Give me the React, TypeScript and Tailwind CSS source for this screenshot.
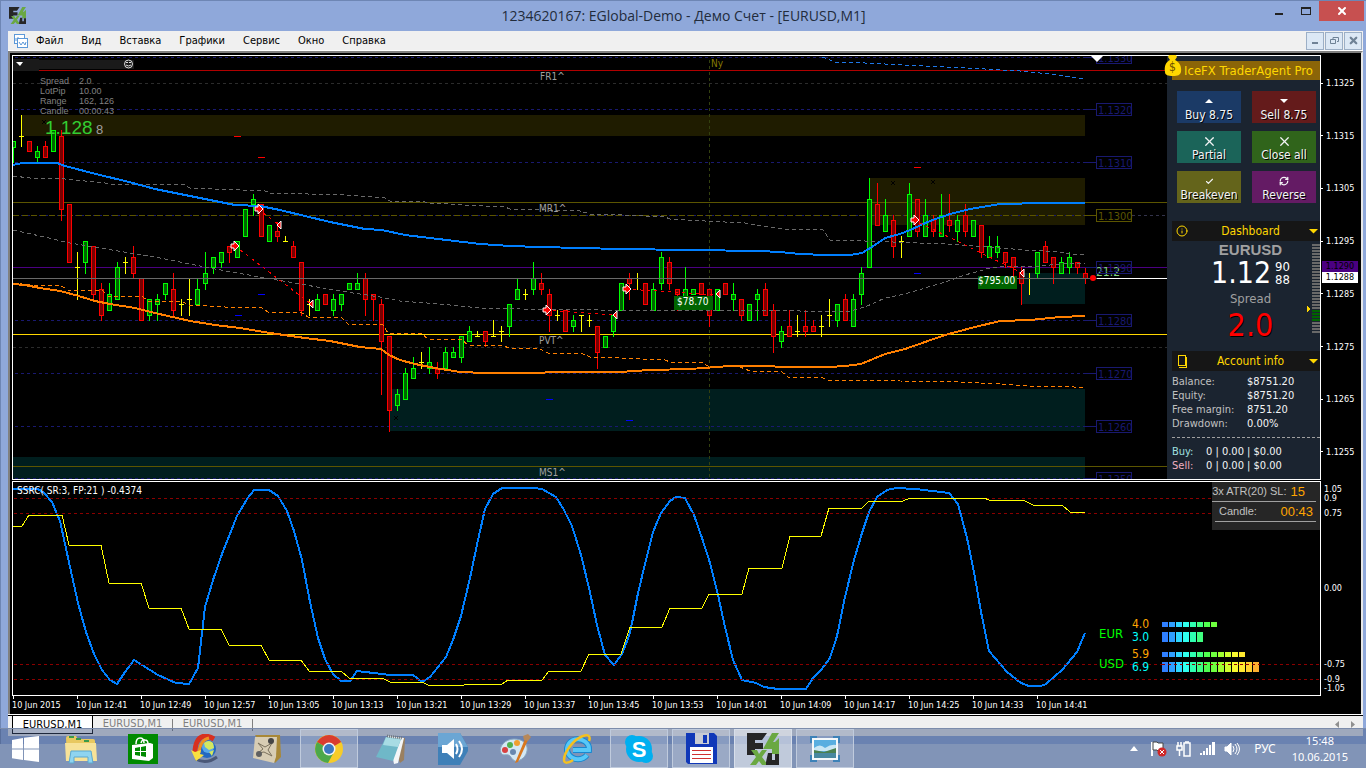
import type { ReactNode } from 'react'
import { Check, Info, RefreshCw, X } from 'lucide-react'

type Kind = 'u' | 'd' | 'n'
// high, body top, body bottom, low, kind (up / down / neutral)
type Candle = [number, number, number, number, Kind]

const candles: Candle[] = [
  [141, 141, 147, 162, 'u'], [115, 136, 136, 146, 'n'], [141, 141, 151, 151, 'd'], [146, 151, 157, 162, 'u'],
  [141, 146, 157, 157, 'd'], [130, 130, 151, 151, 'u'], [130, 136, 209, 220, 'd'], [204, 204, 262, 262, 'd'],
  [252, 267, 267, 299, 'n'], [241, 241, 262, 273, 'u'], [246, 246, 294, 298, 'd'], [283, 289, 315, 320, 'd'],
  [283, 294, 310, 310, 'u'], [262, 267, 299, 299, 'u'], [257, 262, 262, 273, 'n'], [246, 257, 273, 277, 'd'],
  [278, 278, 320, 320, 'd'], [299, 299, 315, 320, 'u'], [294, 299, 304, 320, 'u'], [283, 283, 294, 299, 'u'],
  [273, 289, 310, 316, 'd'], [299, 304, 304, 315, 'n'], [279, 299, 299, 315, 'n'], [279, 289, 304, 304, 'u'],
  [252, 273, 283, 289, 'u'], [257, 257, 267, 273, 'u'], [252, 252, 262, 267, 'u'], [246, 246, 252, 262, 'd'],
  [241, 241, 257, 257, 'u'], [209, 209, 236, 236, 'u'], [194, 199, 204, 215, 'u'], [204, 204, 236, 236, 'd'],
  [225, 225, 241, 241, 'u'], [222, 231, 236, 241, 'd'], [236, 241, 241, 241, 'n'], [241, 246, 257, 257, 'd'],
  [262, 262, 310, 315, 'd'], [299, 304, 304, 315, 'n'], [294, 299, 310, 310, 'u'], [294, 294, 304, 304, 'd'],
  [294, 299, 310, 315, 'u'], [294, 294, 304, 310, 'u'], [283, 283, 289, 289, 'u'], [273, 283, 289, 289, 'u'],
  [273, 278, 299, 315, 'd'], [294, 294, 299, 320, 'd'], [299, 304, 341, 394, 'd'], [336, 336, 410, 431, 'd'],
  [389, 394, 405, 410, 'u'], [368, 373, 399, 399, 'u'], [357, 368, 378, 378, 'u'], [352, 362, 362, 368, 'n'],
  [347, 362, 368, 373, 'u'], [362, 369, 373, 378, 'd'], [347, 352, 368, 368, 'u'], [347, 352, 357, 357, 'u'],
  [336, 336, 357, 362, 'u'], [326, 331, 341, 341, 'u'], [331, 336, 336, 336, 'n'], [331, 331, 341, 346, 'd'],
  [320, 336, 336, 336, 'n'], [326, 331, 331, 341, 'n'], [304, 304, 326, 336, 'u'], [278, 289, 299, 299, 'u'],
  [289, 294, 294, 299, 'n'], [262, 278, 289, 294, 'u'], [273, 283, 289, 294, 'd'], [289, 294, 315, 331, 'd'],
  [310, 315, 315, 320, 'n'], [310, 310, 331, 331, 'd'], [315, 320, 326, 331, 'u'], [315, 315, 315, 331, 'n'],
  [315, 320, 320, 326, 'n'], [326, 326, 352, 368, 'd'], [336, 336, 347, 347, 'u'], [315, 315, 331, 336, 'u'],
  [283, 283, 310, 310, 'u'], [273, 278, 283, 299, 'd'], [273, 278, 278, 289, 'n'], [283, 283, 304, 304, 'd'],
  [283, 289, 310, 310, 'u'], [252, 257, 283, 289, 'u'], [257, 262, 283, 289, 'd'], [289, 289, 294, 310, 'd'],
  [267, 289, 299, 299, 'u'], [289, 289, 294, 294, 'u'], [283, 283, 294, 294, 'd'], [289, 289, 315, 326, 'd'],
  [289, 289, 310, 310, 'u'], [283, 283, 294, 294, 'd'], [283, 294, 299, 310, 'u'], [299, 299, 315, 320, 'd'],
  [304, 304, 320, 320, 'u'], [289, 294, 299, 320, 'u'], [283, 289, 315, 315, 'd'], [304, 310, 336, 352, 'd'],
  [326, 331, 341, 347, 'u'], [310, 326, 336, 336, 'd'], [315, 331, 331, 336, 'n'], [310, 326, 331, 336, 'd'],
  [320, 326, 331, 331, 'd'], [315, 326, 326, 336, 'n'], [299, 315, 315, 326, 'n'], [304, 304, 320, 326, 'u'],
  [294, 299, 320, 320, 'd'], [294, 299, 326, 326, 'u'], [267, 273, 294, 304, 'u'], [178, 199, 267, 267, 'u'],
  [183, 204, 225, 225, 'd'], [199, 215, 231, 231, 'u'], [215, 220, 246, 257, 'd'], [236, 241, 241, 257, 'n'],
  [183, 194, 236, 236, 'u'], [199, 199, 231, 236, 'd'], [199, 215, 236, 236, 'u'], [215, 220, 231, 236, 'd'],
  [194, 215, 236, 236, 'u'], [194, 220, 225, 231, 'd'], [215, 220, 231, 241, 'u'], [204, 215, 231, 236, 'd'],
  [220, 220, 236, 236, 'u'], [225, 225, 252, 257, 'd'], [236, 246, 257, 257, 'u'], [236, 246, 252, 257, 'u'],
  [252, 252, 262, 267, 'd'], [257, 257, 267, 279, 'd'], [267, 272, 283, 304, 'd'], [273, 278, 278, 294, 'n'],
  [252, 252, 273, 277, 'u'], [241, 246, 262, 262, 'd'], [257, 257, 267, 283, 'd'], [257, 262, 273, 273, 'u'],
  [252, 257, 267, 273, 'u'], [262, 262, 267, 273, 'd'], [267, 273, 278, 283, 'd'],
]

const colors: Record<Kind, [string, string]> = {
  u: ['#00ff00', '#006400'],
  d: ['#ff0000', '#780000'],
  n: ['#ffff00', '#ffff00'],
}

const upperBand =
  '13,165 22,163 57,163 65,166 100,175 125,181 155,189 190,196 215,201 235,205 260,206 280,210 305,216 330,222 365,229 382,230 405,235 430,238 455,241 480,244 510,246 540,247 580,248 620,249 690,250 760,251 780,252 800,254 825,255 850,255 862,253 875,245 885,238 900,234 910,230 930,221 950,214 970,209 1000,204 1045,203 1085,203'
const lowerBand =
  '13,284 25,285 40,288 60,291 75,295 95,301 110,304 135,308 155,313 190,321 215,325 240,328 270,333 305,338 330,341 360,347 381,349 389,355 400,360 415,364 435,368 460,372 485,373 530,373 560,372 620,372 650,370 690,369 730,366 760,366 790,367 830,367 845,366 861,364 885,354 905,349 925,342 945,335 975,327 1000,321 1030,320 1060,317 1085,316'
const greyUpper =
  '13,176 30,178 65,179 105,183 110,184 185,185 190,188 265,191 270,193 345,195 385,198 390,201 425,202 430,203 465,205 505,207 510,209 580,211 590,214 625,215 665,217 670,219 705,221 745,223 782,229 823,230 830,240 865,241 920,243 945,244 975,246 1000,248 1025,250 1060,252 1070,254 1085,254'
const greyMiddle =
  '13,230 40,236 70,243 100,248 130,253 160,258 190,264 215,269 260,277 300,284 340,291 380,297 400,301 440,304 480,308 520,309 600,310 760,310 800,311 850,311 865,307 885,298 905,294 925,288 945,282 965,275 990,268 1010,266 1040,266 1060,264 1085,263'
const orangeDashed =
  '13,283 30,285 60,285 68,290 103,291 108,296 143,297 148,301 183,302 188,305 225,307 262,308 268,312 302,313 308,317 342,318 348,324 383,325 388,333 422,334 428,339 462,340 468,345 503,346 510,348 540,349 548,353 583,354 590,357 620,358 665,360 670,362 703,363 708,366 740,367 750,371 782,372 788,377 823,378 830,381 860,380 900,381 960,382 1000,384 1030,386 1065,386 1083,388'

const ssrcBlue =
  '13,489 38,489 44,493 52,502 60,521 70,567 78,603 86,632 94,654 102,670 110,680 117,684 125,672 134,660 142,665 158,675 176,683 189,684 198,668 205,607 213,580 222,554 237,516 247,499 254,490 269,490 278,496 287,511 294,531 302,560 310,602 318,638 325,659 333,674 341,681 350,681 357,671 390,675 413,675 422,682 430,677 446,657 453,640 461,616 470,578 478,540 485,509 493,494 502,488 533,488 542,489 556,497 564,510 572,526 581,555 589,588 597,625 605,655 614,665 622,654 629,636 632,623 638,593 646,560 653,532 661,513 670,501 676,497 685,498 694,515 702,538 710,563 718,595 725,627 733,660 742,680 756,683 764,687 778,689 806,689 813,678 821,670 830,658 837,636 845,597 854,560 862,533 869,512 877,497 887,490 896,488 916,489 949,493 958,504 967,538 974,572 981,612 989,651 1007,672 1021,683 1029,686 1041,686 1046,684 1062,670 1077,652 1085,633'
const ssrcYellow =
  '13,526 22,526 29,515 62,515 69,545 101,545 109,583 141,583 149,608 181,608 189,629 221,629 229,645 261,645 269,660 301,660 309,671 341,671 349,678 382,678 390,682 422,682 428,685 464,685 502,684 508,680 542,680 549,671 581,671 589,654 621,654 630,627 662,627 670,608 702,608 709,594 742,594 749,568 782,568 790,536 821,536 829,508 862,508 869,501 903,501 910,498 984,498 989,500 1023,500 1033,505 1062,505 1070,512 1085,512'

const priceTags = [
  { y: 57, label: '1.1330' }, { y: 109, label: '1.1320' }, { y: 162, label: '1.1310' },
  { y: 215, label: '1.1300', olive: true }, { y: 267, label: '1.1290' }, { y: 320, label: '1.1280' },
  { y: 373, label: '1.1270' }, { y: 426, label: '1.1260' }, { y: 478, label: '1.1250' },
]

const entries = [[259, 209], [235, 246], [547, 310], [627, 289], [915, 220]]
const exits = [[279, 225], [311, 304], [615, 315], [718, 294], [1022, 273]]
const fractals = [
  [237, 136, 'red'], [261, 157, 'red'], [917, 167, 'red'], [261, 294, 'blue'], [238, 315, 'blue'],
  [549, 399, 'blue'], [629, 420, 'blue'], [917, 273, 'blue'],
] as const

const meterColors = [
  '#2f7fff', '#2f9fff', '#2fd7ff', '#2fffef', '#2fffb0', '#3fff80', '#4fff4f',
  '#6fff3f', '#a0ff30', '#d0ff2f', '#f8f82f', '#ffe82f', '#ffcf2f', '#ffb02f',
]
const meters = [
  { y: 622, h: 5, count: 8 }, { y: 632, h: 10, count: 6 },
  { y: 652, h: 5, count: 12 }, { y: 662, h: 10, count: 14 },
]

function PriceChart() {
  return (
    <svg viewBox="13 56 1154 423" className="block h-auto w-full font-['DejaVu_Sans_Condensed','Noto_Sans',sans-serif]">
      <rect x="21" y="115" width="1064" height="21" fill="#1f1c00" />
      <rect x="869" y="178" width="216" height="47" fill="#1f1c00" />
      <rect x="389" y="389" width="696" height="42" fill="#001e1e" />
      <rect x="13" y="457" width="1072" height="22" fill="#001e1e" />
      <rect x="1021" y="273" width="64" height="31" fill="#001e1e" />

      <g shapeRendering="crispEdges" fill="none">
        <path d="M13 83.5H1167M13 347.5H1167" stroke="#2c2c2c" strokeDasharray="3 3" />
        {priceTags.map((t) => (
          <path key={t.label} d={`M15 ${t.y}.5H1085`} stroke="#191970" strokeDasharray="3 3" />
        ))}
        <path d="M13 215.5H1085" stroke="#5c5500" strokeDasharray="6 3" />
        <path d="M1132 215.5H1167" stroke="#33334a" strokeDasharray="3 3" />
        <path d="M709.5 60V479" stroke="#33400f" strokeDasharray="3 3" />
        <path d="M39 70.5H1167" stroke="#b00000" />
        <path d="M13 202.5H1167M13 466.5H1167" stroke="#5c5500" />
        <path d="M13 267.5H1167" stroke="#4b0082" />
        <path d="M13 334.5H1167" stroke="#ffd700" />
      </g>

      <g shapeRendering="crispEdges">
        {candles.map(([high, top, bottom, low, kind], i) => {
          const x = 13 + i * 8
          const [line, fill] = colors[kind]
          return (
            <g key={i} stroke={line} fill={fill}>
              <path d={`M${x}.5 ${high}V${low + 1}`} />
              {kind === 'n' ? <path d={`M${x - 2} ${top}.5h5`} /> : <rect x={x - 1.5} y={top + 0.5} width="4" height={Math.max(bottom - top, 1)} />}
            </g>
          )
        })}
      </g>

      <path d="M13 278.5H1097" stroke="#696969" shapeRendering="crispEdges" />
      <path d="M1097 278.5H1167" stroke="#fff" shapeRendering="crispEdges" />
      <g fill="none" shapeRendering="crispEdges">
        <polyline points={greyUpper} stroke="#696969" strokeDasharray="4 3" />
        <polyline points={greyMiddle} stroke="#696969" strokeDasharray="4 3" />
        <polyline points={orangeDashed} stroke="#ff7f00" strokeDasharray="4 3" />
        <polyline points="822,57 835,62 865,63 905,65 945,67 985,69 1020,71 1050,74 1085,79" stroke="#1e78e8" strokeDasharray="4 3" />
        <polyline points={upperBand} stroke="#007fff" strokeWidth="2" />
        <polyline points={lowerBand} stroke="#ff7f00" strokeWidth="2" />
        <path
          d="M258 209L279 225M235 246L311 304M546 310L615 315M626 289L718 295M914 220L1022 273"
          stroke="#ff0000"
          strokeDasharray="3 4"
        />
      </g>

      {fractals.map(([x, y, c]) => (
        <rect key={`${x}-${y}`} x={x - 3} y={y} width="7" height="1" fill={c === 'red' ? '#ff0000' : '#0000ff'} />
      ))}
      {[[44, 122], [893, 183], [933, 182], [396, 418]].map(([x, y]) => (
        <path key={x} d={`M${x - 2} ${y - 2}l4 4m0 -4l-4 4`} stroke="#000" />
      ))}

      <rect x="674" y="296" width="39" height="14" fill="#006400" />
      <text x="677" y="305" fontSize="10" fill="#fff">$78.70</text>
      <rect x="978" y="276" width="39" height="13" fill="#006400" />
      <text x="978" y="284" fontSize="10" fill="#fff">$795.00</text>

      {entries.map(([x, y]) => (
        <path key={x} d={`M${x - 4} ${y - 2}h3v-3l5 5l-5 5v-3h-3z`} fill="#ff0000" stroke="#fff" />
      ))}
      {exits.map(([x, y]) => (
        <path key={x} d={`M${x + 2} ${y - 4}v8l-4 -4z`} fill="#ff0000" stroke="#fff" />
      ))}

      <text x="1096" y="276" fontSize="12" fill="#7fd07f">21.2</text>
      {priceTags.map((t) => (
        <g key={t.label} stroke={t.olive ? '#5c5500' : '#191970'} shapeRendering="crispEdges">
          <path d={`M1085 ${t.y}.5h12`} />
          <rect x="1096.5" y={t.y - 5.5} width="35" height="12" fill="none" />
          <text x="1098" y={t.y + 5} fontSize="11" stroke="none" fill={t.olive ? '#5c5500' : '#191970'}>{t.label}</text>
        </g>
      ))}
      <circle cx="1093" cy="278" r="3" fill="#ff0000" />

      <g fontSize="10" fill="#a0a0a0">
        <text x="540" y="80">FR1^</text>
        <text x="539" y="212">MR1^</text>
        <text x="539" y="344">PVT^</text>
        <text x="539" y="476">MS1^</text>
      </g>
      <text x="711" y="67" fontSize="10" fill="#857c00">Ny</text>
      <path d="M1091 56h12l-6 6z" fill="#fff" />

      <path d="M13 59h26v1h95v9h-95v2h-26z" fill="#1a1a1a" />
      <path d="M16 62h7l-3 4z" fill="#fff" />
      <circle cx="128.500" cy="64" r="4" fill="none" stroke="#ddd" />
      <path d="M126 62.500h2m1 0h2M126 65q2.500 2 5 0" fill="none" stroke="#ddd" />

      <g className="font-['Liberation_Sans',sans-serif]">
        <g fontSize="9" fill="#808080">
          <text x="40" y="84">Spread</text><text x="79" y="84">2.0</text>
          <text x="40" y="94">LotPip</text><text x="79" y="94">10.00</text>
          <text x="40" y="104">Range</text><text x="79" y="104">162, 126</text>
          <text x="40" y="114">Candle</text><text x="79" y="114">00:00:43</text>
        </g>
        <text x="45" y="134" fontSize="19" fill="#32cd32">1.128</text>
        <text x="96" y="134" fontSize="13" fill="#a0a0a0">8</text>
      </g>
    </svg>
  )
}

function SsrcChart() {
  return (
    <svg viewBox="13 482 1307 213" className="block h-auto w-full font-['DejaVu_Sans_Condensed','Noto_Sans',sans-serif]">
      <g fill="none" shapeRendering="crispEdges">
        <polyline points={ssrcBlue} stroke="#007fff" strokeWidth="2" />
        <path d="M14 498.5H1320M14 513.5H1320M14 664.5H1320M14 679.5H1320" stroke="#8b0000" strokeDasharray="3 3" />
        <polyline points={ssrcYellow} stroke="#ffff00" />
      </g>
      <text x="17" y="494" fontSize="10" fill="#fff">SSRC( SR:3, FP:21 ) -0.4374</text>
      <g fontSize="13" fill="#00ff00">
        <text x="1099" y="638">EUR</text>
        <text x="1099" y="668">USD</text>
      </g>
      <g fontSize="12">
        <text x="1132" y="628" fill="#ffa500">4.0</text>
        <text x="1132" y="641" fill="#00ffff">3.0</text>
        <text x="1132" y="658" fill="#ffa500">5.9</text>
        <text x="1132" y="671" fill="#00ffff">6.9</text>
      </g>
      {meters.map((m) =>
        meterColors.slice(0, m.count).map((c, i) => (
          <rect key={`${m.y}-${i}`} x={1162 + i * 7} y={m.y} width="6" height={m.h} fill={c} />
        )),
      )}
      <path d="M1162 664.5h98" stroke="#8b0000" strokeDasharray="3 3" />
    </svg>
  )
}

function AgentButton({ label, icon, className }: { label: string; icon: ReactNode; className: string }) {
  return (
    <button className={`flex h-8 w-16 flex-col items-center justify-between pt-1 text-[12px] leading-4 whitespace-nowrap text-gray-100 ${className}`}>
      <span className="flex h-3 items-center">{icon}</span>
      <span className="[text-shadow:1px_1px_0_#000]">{label}</span>
    </button>
  )
}

function SectionHead({ title, icon }: { title: string; icon: ReactNode }) {
  return (
    <div className="ml-[5px] flex h-5 items-center bg-[#161616] pr-[2px] pl-1 text-[12px] text-[#ffd700]">
      {icon}
      <span className="flex-1 pl-1 text-center">{title}</span>
      <svg width="9" height="5" viewBox="0 0 9 5"><path d="M0 0h9L4.500 4.500z" fill="#ffd700" /></svg>
    </div>
  )
}

const account = [
  ['Balance:', '$8751.20'],
  ['Equity:', '$8751.20'],
  ['Free margin:', '8751.20'],
  ['Drawdown:', '0.00%'],
]

function AgentPanel() {
  return (
    <aside className="relative w-[153px] shrink-0 bg-[#1b2430] pt-[5px]">
      <svg width="18" height="22" viewBox="0 0 18 22" className="absolute -top-px -left-[3px]">
        <path d="M5 0h7l1 2-2 3c4 2 7 6 6 12-1 3-3 4-8 4s-8-1-8-4C0 11 2 7 6 5L4 2z" fill="#ffd700" />
        <text x="5" y="16" fontSize="12" fill="#6b4e00">$</text>
      </svg>
      <h2 className="ml-[5px] h-[19px] bg-[#8b6508] pl-3 text-[13px] leading-[19px] whitespace-nowrap text-[#ffd700]">IceFX TraderAgent Pro</h2>
      <div className="mt-[11px] ml-[10px] grid w-[139px] grid-cols-[64px_64px] justify-between gap-y-2">
        <AgentButton label="Buy 8.75" className="bg-[#1b3a66]" icon={<svg width="8" height="4"><path d="M0 4h8L4 0z" fill="#fff" /></svg>} />
        <AgentButton label="Sell 8.75" className="bg-[#641b1b]" icon={<svg width="8" height="4"><path d="M0 0h8L4 4z" fill="#fff" /></svg>} />
        <AgentButton label="Partial" className="bg-[#1b6459]" icon={<X size={15} />} />
        <AgentButton label="Close all" className="bg-[#30641b]" icon={<X size={15} />} />
        <AgentButton label="Breakeven" className="bg-[#64641b]" icon={<Check size={9} strokeWidth={3} />} />
        <AgentButton label="Reverse" className="bg-[#641b64]" icon={<RefreshCw size={10} strokeWidth={3} />} />
      </div>
      <div className="mt-[18px]">
        <SectionHead title="Dashboard" icon={<Info size={12} />} />
      </div>
      <div className="flex h-[110px]">
        <div className="flex flex-1 flex-col items-center pl-7">
          <strong className="font-['Liberation_Sans',sans-serif] text-[15px] leading-[18px] text-[#a0a0a0]">EURUSD</strong>
          <div className="flex items-center gap-1 text-white">
            <span className="text-[30px] leading-7">1.12</span>
            <span className="flex flex-col text-[13px] leading-[13px]"><span>90</span><span>88</span></span>
          </div>
          <span className="mt-[4px] text-[13px] leading-4 text-[#a0a0a0]">Spread</span>
          <span className="text-[32px] leading-9 text-[#ff0000] [text-shadow:1px_1px_0_#000]">2.0</span>
        </div>
        <svg width="14" height="90" viewBox="0 0 14 90" className="mt-[3px]" shapeRendering="crispEdges">
          {Array.from({ length: 30 }, (_, i) => (
            <rect key={i} x="6" y={i * 3} width="8" height="2" fill={i >= 22 && i < 26 ? '#006400' : '#696969'} />
          ))}
          <path d="M1 62v6l4-3z" fill="#ffd700" />
        </svg>
      </div>
      <SectionHead title="Account info" icon={<svg width="12" height="14" fill="none" stroke="#ffd700"><rect x="2.500" y="1.500" width="7" height="10" /><path d="M3 13.500h8M10.500 3v10" /></svg>} />
      <dl className="mt-1 ml-[5px] grid grid-cols-[75px_1fr] text-[11px] leading-[14px] text-[#c0c0c0]">
        {account.map(([k, v]) => (
          <div key={k} className="contents">
            <dt>{k}</dt>
            <dd className="text-gray-100">{v}</dd>
          </div>
        ))}
      </dl>
      <div className="mt-[6px] mb-[7px] ml-[5px] border-t border-dashed border-[#a0a0a0]" />
      <dl className="ml-[5px] grid grid-cols-[34px_1fr] text-[11px] leading-[14px] text-gray-100">
        <dt className="text-[#a0e0e0]">Buy:</dt>
        <dd>0 | 0.00 | $0.00</dd>
        <dt className="text-[#f0b0c0]">Sell:</dt>
        <dd>0 | 0.00 | $0.00</dd>
      </dl>
    </aside>
  )
}

const oscillatorScale = [
  [489, '1.05'], [498, '0.9'], [513, '0.75'], [588, '0.00'], [664, '-0.75'], [679, '-0.9'], [688, '-1.05'],
] as const

function OscillatorAxis() {
  return (
    <div className="relative w-10 shrink-0">
      {oscillatorScale.map(([y, label]) => (
        <span key={label} className="absolute left-[3px] -translate-y-1/2 leading-3" style={{ top: `${((y - 481) / 215) * 100}%` }}>{label}</span>
      ))}
    </div>
  )
}

function PriceAxis() {
  return (
    <div className="relative flex w-10 shrink-0 flex-col justify-between pt-[22px] pb-[22px]">
      {['1.1325', '1.1315', '1.1305', '1.1295', '1.1285', '1.1275', '1.1265', '1.1255'].map((p) => (
        <span key={p} className="flex items-center gap-[3px] leading-3 before:h-px before:w-[2px] before:bg-white">{p}</span>
      ))}
      <div className="absolute top-[206px] left-[1px] w-9 bg-[#4b0082] text-center leading-[11px] text-black">1.1290</div>
      <div className="absolute top-[217px] left-[1px] w-9 bg-white text-center leading-[11px] text-black">1.1288</div>
    </div>
  )
}

const times = [
  '2015', '12:41', '12:49', '12:57', '13:05', '13:13', '13:21', '13:29', '13:37',
  '13:45', '13:53', '14:01', '14:09', '14:17', '14:25', '14:33', '14:41',
]

function FxLogo({ size }: { size: number }) {
  return (
    <svg width={size} height={size} viewBox="0 0 32 32">
      <path d="M0 0h20l-5 7H8v3h8v6H8v3l3 3H0z" fill="#262626" />
      <path d="M25 0h7l-6 9h2l4-4v16h-7v-5h-9z" fill="#6aa842" />
      <path d="M4 17h6l2 4 3-4h5l-5 7 6 8h-6l-3-4-3 4H3l6-8z" fill="#6aa842" />
      <path d="M21 20h4v7h3v-6h4v11H19v-3z" fill="#262626" />
    </svg>
  )
}

function StartIcon() {
  return (
    <svg width="28" height="26" viewBox="0 0 28 26" fill="#fff">
      <path d="M0 4l11-2v10.500H0zM12 1.800L27 0v12.500H12zM0 13.500h11V24L0 22.200zM12 13.500h15V26l-15-2z" />
    </svg>
  )
}

const taskIcons: { name: string; state?: 'open' | 'active'; icon: ReactNode }[] = [
  {
    name: 'Проводник',
    icon: (
      <svg width="34" height="30" viewBox="0 0 34 30">
        <path d="M2 4q0-2 2-2h8l2 3h15q2 0 2 2v18H3z" fill="#e8c860" />
        <path d="M5 3h5M12 5h5M20 7h5" stroke="#3a9a4a" strokeWidth="2" />
        <path d="M1 9h31l1 18H2z" fill="#f7e298" />
        <path d="M5 29l2-12h20l2 12h-5v-6H10v6z" fill="#8fd4f0" stroke="#5aa8d0" />
      </svg>
    ),
  },
  {
    name: 'Магазин',
    icon: (
      <svg width="30" height="30" viewBox="0 0 30 30">
        <rect width="30" height="30" fill="#008a00" />
        <path d="M4 11l18-2 3 1v14l-4 3-17-2z" fill="#fff" />
        <path d="M8 10q0-6 4-6t4 5M13 9q1-4 4-3 3 0 3 4" fill="none" stroke="#fff" strokeWidth="1.500" />
        <path d="M7 14l5-1v4H7zM13 13l5-1v5h-5zM7 18h5v4l-5-1zM13 18h5v5l-5-1z" fill="#008a00" />
      </svg>
    ),
  },
  {
    name: 'Download Master',
    icon: (
      <svg width="30" height="30" viewBox="0 0 30 30">
        <path d="M6 25q10 6 21-2" fill="none" stroke="#4a5878" strokeWidth="3" />
        <circle cx="17" cy="15" r="9" fill="#2468c0" />
        <circle cx="18" cy="13" r="6" fill="#58a8e8" />
        <path d="M14 9q5-4 9 0l1 5-5 2-4-3zM19 18l5-2-2 6z" fill="#d4e860" />
        <path d="M24 5Q12-2 7 8q-2 4-2 11" fill="none" stroke="#d83020" strokeWidth="5" />
        <path d="M19 4Q10 6 9 19" fill="none" stroke="#f09020" strokeWidth="3" />
        <path d="M1 16l5 11 8-6-4-1 1-4-6 2z" fill="#f8e040" />
      </svg>
    ),
  },
  {
    name: 'Карта',
    icon: (
      <svg width="30" height="30" viewBox="0 0 30 30">
        <path d="M3 1h25l1 22-6 6z" fill="#a88838" />
        <path d="M3 3h22l-1 20-2 6L1 24z" fill="#d8cdb4" />
        <path d="M6 9l7 4 7-4-4 7 4 6-8-4-6 1 5-4z" fill="none" stroke="#7a705c" />
        <circle cx="19" cy="7" r="3" fill="#454545" /><circle cx="7" cy="20" r="3" fill="#606060" />
      </svg>
    ),
  },
  {
    name: 'Google Chrome',
    state: 'open',
    icon: (
      <svg width="30" height="30" viewBox="0 0 30 30">
        <circle cx="15" cy="15" r="14" fill="#f7cc28" />
        <path d="M15 15L3 8a14 14 0 0 1 24.200 0z" fill="#d93c2e" />
        <path d="M15 15L3 8a14 14 0 0 0 11 21l6-11z" fill="#4ca84a" />
        <circle cx="15" cy="15" r="6.500" fill="#f3f3f3" />
        <circle cx="15" cy="15" r="5" fill="#3b78c0" />
      </svg>
    ),
  },
  {
    name: 'Блокнот',
    icon: (
      <svg width="30" height="30" viewBox="0 0 30 30">
        <path d="M12 2l17 2-1 22-4 3z" fill="#9a8060" />
        <path d="M12 2l16 2-6 25-4 1z" fill="#f4f6f8" />
        <path d="M10 3l15 2-8 22-17-4z" fill="#6fb8c8" />
        <path d="M10 3l15 2-3 8-15-2z" fill="#a8dce4" />
        <path d="M11 2l15 2" stroke="#707880" strokeWidth="3" strokeDasharray="1 1" />
      </svg>
    ),
  },
  {
    name: 'Звук',
    icon: (
      <svg width="30" height="32" viewBox="0 0 30 32">
        <path d="M0 0h22l8 14v4l-8 14H0z" fill="#3f80b8" />
        <path d="M0 0h22l8 14H0z" fill="#6ba6d4" />
        <path d="M4 12h5l7-6v20l-7-6H4z" fill="#fff" />
        <path d="M18 11q3 5 0 10M21 8q6 8 0 16" fill="none" stroke="#fff" strokeWidth="2" />
      </svg>
    ),
  },
  {
    name: 'Paint',
    icon: (
      <svg width="32" height="30" viewBox="0 0 32 30">
        <path d="M15 5C6 5-1 13 2 19c2 4 6 0 9 3 3 4 5 7 10 4 5-2 8-8 7-13S22 5 15 5z" fill="#d4e8f4" stroke="#88a8c0" />
        <circle cx="6" cy="16" r="3" fill="#d84040" /><circle cx="11" cy="11" r="3" fill="#50b050" />
        <circle cx="18" cy="9" r="3" fill="#f0a030" /><circle cx="14" cy="18" r="3" fill="#6888b0" />
        <path d="M16 29L26 5l3 1-10 22z" fill="#d87820" /><path d="M25 6l-1-4 5-2 3 3-3 4z" fill="#b88858" />
      </svg>
    ),
  },
  {
    name: 'Internet Explorer',
    icon: (
      <svg width="32" height="32" viewBox="0 0 32 32" fill="none">
        <path d="M26 22a11 10 0 1 1 2-5H12" stroke="#1888d0" strokeWidth="6" />
        <path d="M26 22a11 10 0 1 1 2-5H12" stroke="#58c8f8" strokeWidth="4" />
        <path d="M28 8c2-5-1-7-6-5C13 6 3 19 3 27c0 4 5 3 9 0" stroke="#f4c020" strokeWidth="2.500" />
      </svg>
    ),
  },
  {
    name: 'Skype',
    state: 'open',
    icon: (
      <svg width="30" height="30" viewBox="0 0 30 30" className="font-['Liberation_Sans',sans-serif]">
        <circle cx="15" cy="15" r="13" fill="#00aff0" /><circle cx="8" cy="8" r="7" fill="#00aff0" /><circle cx="22" cy="22" r="7" fill="#00aff0" />
        <text x="15" y="23" fontSize="22" fontWeight="bold" textAnchor="middle" fill="#fff">S</text>
      </svg>
    ),
  },
  {
    name: 'Total Commander',
    state: 'open',
    icon: (
      <svg width="31" height="31" viewBox="0 0 31 31">
        <path d="M0 0h28l3 3v28H2l-2-2z" fill="#1038b8" />
        <rect x="9" width="14" height="11" fill="#c8ccd4" /><rect x="17" y="2" width="4" height="8" fill="#1038b8" />
        <rect x="4" y="14" width="23" height="16" fill="#fff" />
        <path d="M6 17.500h19M6 21.500h19M6 25.500h19" stroke="#d03030" />
      </svg>
    ),
  },
  { name: 'MetaTrader', state: 'active', icon: <FxLogo size={32} /> },
  {
    name: 'Просмотр изображений',
    state: 'open',
    icon: (
      <svg width="30" height="26" viewBox="0 0 30 26">
        <path d="M0 0h7v7H0zM23 0h7v7h-7zM0 19h7v7H0zM23 19h7v7h-7z" fill="#3d82b8" />
        <rect x="2" y="2" width="26" height="22" fill="#f4f8fa" /><rect x="4" y="4" width="22" height="18" fill="#58aee0" />
        <path d="M4 12q6-5 11 0 6-4 11-3v6H4z" fill="#c8e6f4" /><path d="M4 14l10 2 12-4v6H4z" fill="#4a8050" /><path d="M4 17h22v5H4z" fill="#4888a0" />
      </svg>
    ),
  },
]

function Taskbar() {
  return (
    <nav className="relative -mt-4 flex h-10 items-center border-t border-[#7c8cab] bg-[rgba(64,84,129,0.46)] font-['Noto_Sans',sans-serif]">
      <button aria-label="Пуск" className="flex h-full w-[52px] items-center justify-center"><StartIcon /></button>
      <div className="flex h-full flex-1 gap-1">
        {taskIcons.map((t) => (
          <button
            key={t.name}
            aria-label={t.name}
            className={`flex h-full w-[58px] items-center justify-center border ${
              t.state === 'active' ? 'border-[#d8dfea] bg-white/50' : t.state === 'open' ? 'border-[#c0cbdd] bg-white/20' : 'border-transparent'
            }`}
          >
            {t.icon}
          </button>
        ))}
      </div>
      <div className="flex items-center gap-2 text-white">
        <svg width="8" height="5"><path d="M0 5h8L4 0z" fill="#fff" /></svg>
        <svg width="18" height="16" viewBox="0 0 18 16" className="ml-1">
          <path d="M2 1v14" stroke="#fff" strokeWidth="2" /><path d="M3 1h4l1 1h5v8H8L7 9H3z" fill="#fff" stroke="#444" />
          <circle cx="12" cy="11" r="4.500" fill="#d02828" /><path d="M10 9l4 4m0-4l-4 4" stroke="#fff" />
        </svg>
        <svg width="16" height="16" viewBox="0 0 16 16" fill="none" stroke="#fff" strokeWidth="1.500">
          <rect x="8" y="2" width="6" height="13" /><path d="M9 1h4M2 1v4M5 1v4M1 5h5v4H1zM3.500 9v6" />
        </svg>
        <svg width="16" height="14" viewBox="0 0 16 14" fill="#fff"><path d="M0 11h2v2H0zM3 9h2v4H3zM6 6h2v7H6zM9 3h2v10H9zM12 0h3v13h-3z" /></svg>
        <svg width="16" height="14" viewBox="0 0 16 14" fill="none" stroke="#fff">
          <path d="M1 5h2l4-4v12L3 9H1z" fill="#fff" /><path d="M9 4q2 3 0 6M11 2q4 5 0 10M13 1q5 6 0 12" />
        </svg>
        <span className="ml-[6px] text-[12px]">РУС</span>
        <time className="mr-[18px] ml-2 text-center text-[11px] leading-4">15:48<br />10.06.2015</time>
      </div>
    </nav>
  )
}

function TitleBar() {
  return (
    <header className="flex h-[30px] items-start">
      <div className="w-[140px] pt-[6px] pl-2"><FxLogo size={17} /></div>
      <h1 className="flex-1 text-center font-['Open_Sans',sans-serif] text-[14px] leading-[30px] text-[#222c3c]">1234620167: EGlobal-Demo - Демо Счет - [EURUSD,M1]</h1>
      <div className="flex w-[140px] justify-end pr-[2px]">
        <button aria-label="Свернуть" className="flex h-5 w-[27px] items-center justify-center"><span className="mt-[6px] h-[2px] w-2 bg-[#222]" /></button>
        <button aria-label="Развернуть" className="flex h-5 w-[27px] items-center justify-center"><span className="h-2 w-[10px] border border-t-2 border-[#222]" /></button>
        <button aria-label="Закрыть" className="flex h-5 w-[45px] items-center justify-center bg-[#c75050] text-white"><X size={12} strokeWidth={4} /></button>
      </div>
    </header>
  )
}

function MenuBar() {
  const mdi = 'flex h-[18px] w-[18px] items-center justify-center border border-[#9cafc6] bg-[#dce8f5]'
  return (
    <div className="flex h-5 items-center border-b border-white bg-[#f0f0f0] pr-px text-black">
      <svg width="16" height="16" viewBox="0 0 16 16" className="mx-[5px]" fill="#fff" stroke="#5c98d8">
        <rect x="1.500" y="1.500" width="10" height="9" /><path d="M3 8V5m2 3V4m2 2v3" /><rect x="4.500" y="5.500" width="10" height="9" /><path d="M6 9l2 3 2-3 2 3 1-3" fill="none" />
      </svg>
      <nav className="flex flex-1 gap-[18px] pt-[2px] pl-[2px] text-[11px]">
        {['Файл', 'Вид', 'Вставка', 'Графики', 'Сервис', 'Окно', 'Справка'].map((m) => (
          <button key={m}>{m}</button>
        ))}
      </nav>
      <div className="flex gap-px">
        <button aria-label="Свернуть окно" className={mdi}><span className="mt-1 h-[2px] w-[6px] bg-[#6f8296]" /></button>
        <button aria-label="Восстановить окно" className={mdi}>
          <svg width="9" height="9" fill="none" stroke="#6f8296"><path d="M3 3V1.500h5.500v4H7M.500 3.500h5v4h-5z" /></svg>
        </button>
        <button aria-label="Закрыть окно" className={mdi}><X size={11} strokeWidth={5} color="#6f8296" /></button>
      </div>
    </div>
  )
}

export default function App() {
  return (
    <div className="min-h-screen bg-[#bac9e6]">
      <div className="border-t border-l border-[#6e86b4] bg-[#8fa8da] pb-2 font-['DejaVu_Sans_Condensed','Noto_Sans',sans-serif]">
        <TitleBar />
        <main className="mr-[3px] ml-[7px]">
          <MenuBar />
          <div className="border-t-2 border-r-2 border-l-2 border-t-[#808080] border-r-[#e8e8e8] border-l-[#808080] bg-black pt-[2px] pl-[2px] text-[9px] text-white">
            <section className="flex">
              <div className="flex min-w-0 flex-1 border border-white">
                <div className="min-w-0 flex-1"><PriceChart /></div>
                <AgentPanel />
              </div>
              <PriceAxis />
            </section>
            <section className="mt-px flex">
              <div className="relative min-w-0 flex-1 border border-white">
                <SsrcChart />
                <div className="absolute top-0 right-0 h-12 w-[108px] bg-[#262626] font-['Liberation_Sans',sans-serif] text-[11px] whitespace-nowrap text-[#c0c0c0]">
                  <div className="mr-1 flex h-5 items-center justify-end gap-1 border-b border-[#a0a0a0] pr-[11px]">3x ATR(20) SL: <span className="text-[13px] text-[#ffa500]">15</span></div>
                  <div className="mr-1 ml-[3px] flex h-5 items-center justify-between border-b border-[#a0a0a0] pr-[3px] pl-1">Candle: <span className="text-[13px] text-[#ffa500]">00:43</span></div>
                </div>
              </div>
              <OscillatorAxis />
            </section>
            <div className="flex h-[18px] overflow-hidden">
              {times.map((t) => (
                <span key={t} className="w-16 shrink-0 leading-3 whitespace-nowrap before:ml-px before:block before:h-[3px] before:w-px before:bg-white">10 Jun {t}</span>
              ))}
            </div>
          </div>
          <div className="border-t border-white" />
          <div className="flex h-[21px] justify-between border-t border-black bg-[#f0f0f0] pl-1 text-[11px] leading-4 text-[#808080]">
            <div className="flex items-start">
              <button className="h-[18px] w-[81px] border-r border-b border-l border-black bg-white leading-4 text-black">EURUSD,M1</button>
              <button className="w-[79px] leading-4">EURUSD,M1</button>
              <span className="mt-[3px] h-3 w-px bg-[#808080]" />
              <button className="w-[79px] leading-4">EURUSD,M1</button>
              <span className="mt-[3px] h-3 w-px bg-[#808080]" />
            </div>
            <div className="flex gap-3 pt-[5px] pr-2">
              <svg width="4" height="7"><path d="M4 0v7L0 3.500z" fill="#909090" /></svg>
              <svg width="4" height="7"><path d="M0 0v7l4-3.500z" fill="#909090" /></svg>
            </div>
          </div>
        </main>
      </div>
      <Taskbar />
    </div>
  )
}
